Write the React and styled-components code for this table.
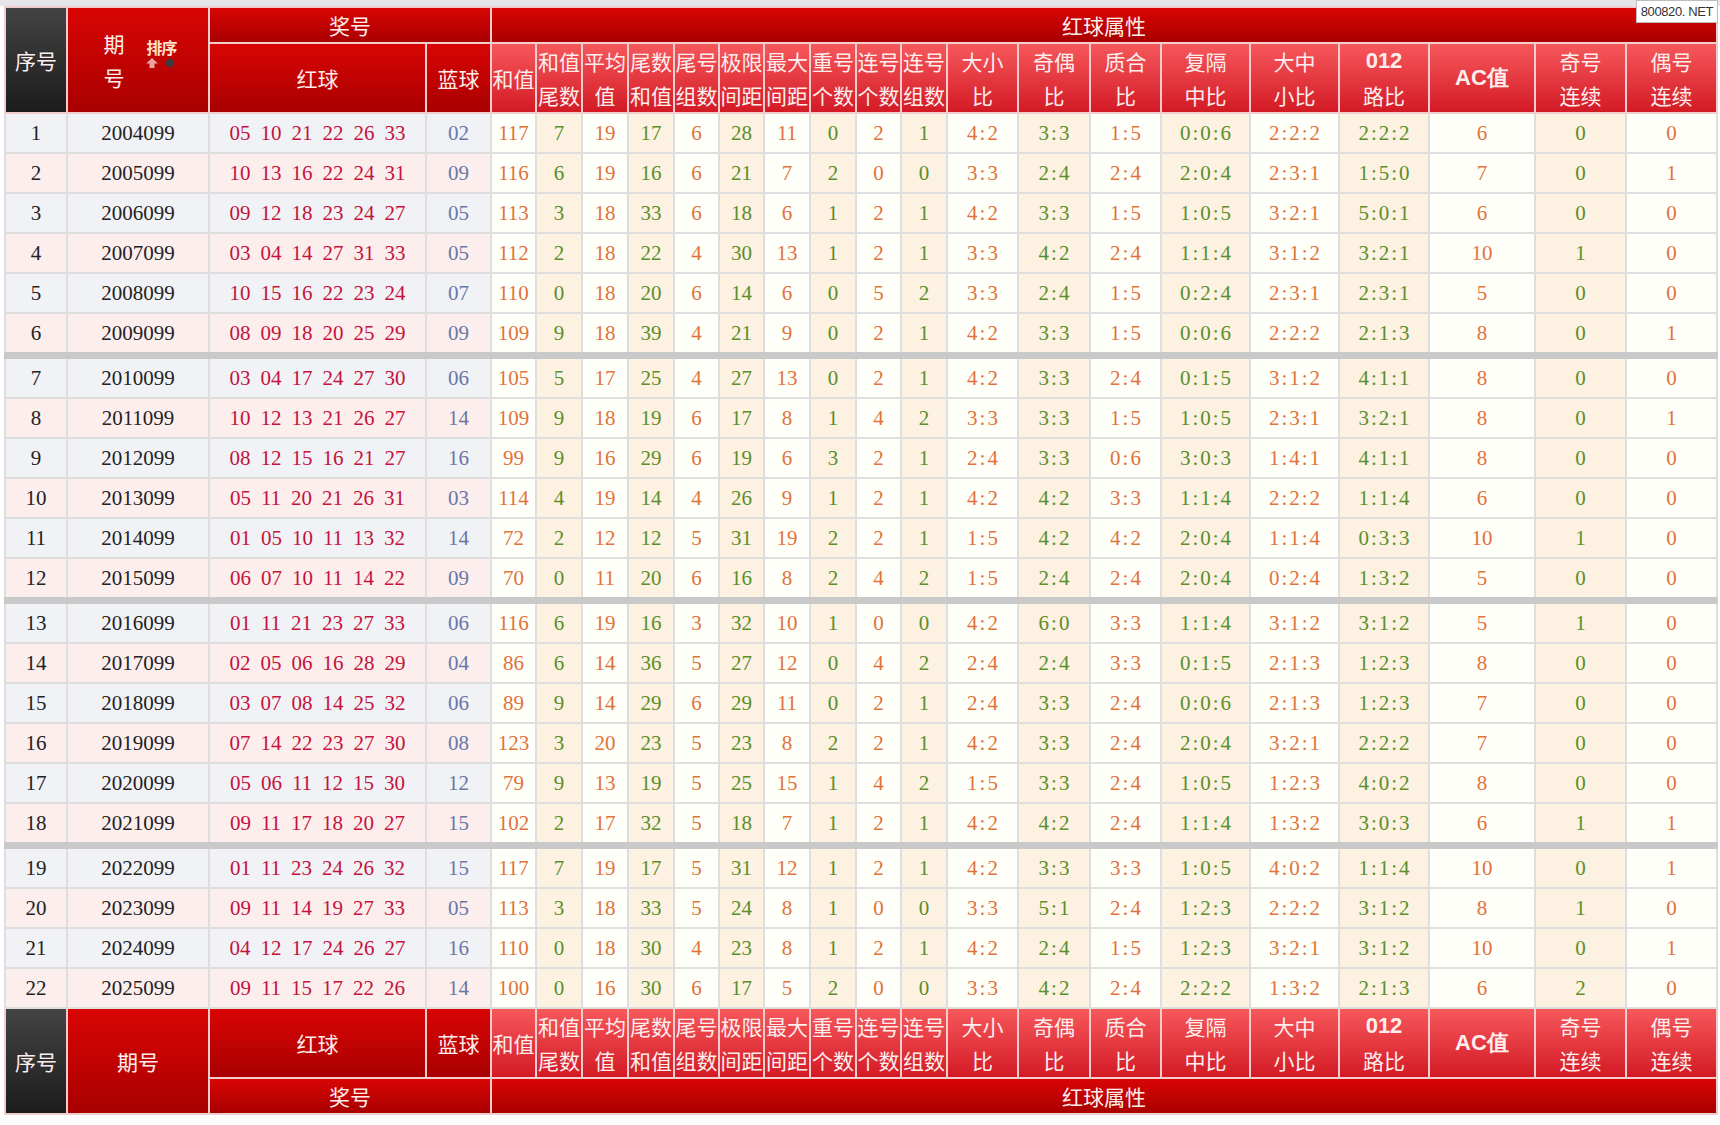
import React from 'react';
import styled, { createGlobalStyle, css } from 'styled-components';

const GlobalStyle = createGlobalStyle`
  html, body {
    margin: 0;
    padding: 0;
    background: #fff;
  }
  body {
    font-family: "Liberation Serif", "Noto Sans CJK SC", serif;
  }
`;

const Page = styled.div`
  position: relative;
  padding: 6px 4px 0 4px;
  background: linear-gradient(#e6e6ea 0, #e6e6ea 6px, #fff 6px);
  min-height: 1125px;
  box-sizing: border-box;
`;

const Watermark = styled.div`
  position: absolute;
  top: 0;
  right: 2px;
  background: #fff;
  border: 1px solid #bdbdbd;
  padding: 2px 4px 2px;
  font-family: "Liberation Sans", Arial, sans-serif;
  font-size: 13px;
  line-height: 17px;
  letter-spacing: -0.4px;
  color: #333;
`;

const Table = styled.table`
  width: 1712px;
  table-layout: fixed;
  border-collapse: collapse;
  border-bottom: 2px solid #dedede;
`;

const headTones = {
  dark: css`
    background: linear-gradient(#434343, #1c1c1c);
  `,
  deep: css`
    background: linear-gradient(#d90505, #a90000);
  `,
  light: css`
    background: linear-gradient(#f6585b, #d31a25);
  `,
};

const HeadCell = styled.th`
  ${(p) => headTones[p.$tone || 'deep']}
  border: 2px solid #f1cdcd;
  color: #fdeeee;
  font-family: "Noto Sans CJK SC", sans-serif;
  font-weight: 400;
  font-size: 21px;
  line-height: 34px;
  padding: 0;
  text-align: center;
  vertical-align: middle;
  height: ${(p) => p.$h || 'auto'};
  overflow: hidden;
`;

const Line = styled.div`
  white-space: nowrap;
  ${(p) =>
    p.$bold &&
    css`
      font-family: "Liberation Sans", Arial, sans-serif;
      font-weight: 700;
      font-size: 22px;
    `}
`;

const PeriodHead = styled.div`
  display: flex;
  align-items: center;
  justify-content: center;
  gap: 22px;
  padding-left: 4px;
`;

const StackText = styled.div`
  display: flex;
  flex-direction: column;
  line-height: 34px;
`;

const Sort = styled.div`
  display: flex;
  flex-direction: column;
  align-items: center;
  margin-top: -14px;
`;

const SortLabel = styled.span`
  font-size: 16px;
  font-weight: 700;
  line-height: 19px;
  color: #ffe2c8;
  letter-spacing: -1px;
`;

const Row = styled.tr`
  ${(p) =>
    p.$sep &&
    css`
      & > td {
        border-top: 7px solid #c9c9c9;
      }
    `}
`;

const cellTones = {
  idx: css`
    color: #222;
  `,
  red: css`
    color: #c4133c;
  `,
  blue: css`
    color: #6877a6;
  `,
};

const Cell = styled.td`
  border: 2px solid #dedede;
  padding: 0;
  height: 38px;
  text-align: center;
  vertical-align: middle;
  font-size: 21px;
  white-space: nowrap;
  overflow: hidden;
  background: ${(p) => (p.$odd ? '#f1f2f6' : '#fdeeee')};
  ${(p) => cellTones[p.$tone]}
`;

const AttrCell = styled.td`
  border: 2px solid #dedede;
  padding: 0;
  height: 38px;
  text-align: center;
  vertical-align: middle;
  font-size: 21px;
  white-space: nowrap;
  overflow: hidden;
  background: ${(p) => (p.$alt ? '#fdf1e1' : '#fffffa')};
  color: ${(p) => (p.$alt ? '#5a8f2b' : '#e0733a')};
  letter-spacing: ${(p) => (p.$ratio ? '2px' : '0')};
  text-indent: ${(p) => (p.$ratio ? '2px' : '0')};
`;

const Balls = styled.div`
  display: flex;
  justify-content: center;
  gap: 10px;
`;

const widths = [62, 142, 217, 65, 45, 46, 46, 46, 45, 45, 46, 46, 45, 46, 71, 72, 71, 89, 89, 90, 106, 91, 91];

const attrs = [
  ['和值'],
  ['和值', '尾数'],
  ['平均', '值'],
  ['尾数', '和值'],
  ['尾号', '组数'],
  ['极限', '间距'],
  ['最大', '间距'],
  ['重号', '个数'],
  ['连号', '个数'],
  ['连号', '组数'],
  ['大小', '比'],
  ['奇偶', '比'],
  ['质合', '比'],
  ['复隔', '中比'],
  ['大中', '小比'],
  ['012', '路比'],
  ['AC值'],
  ['奇号', '连续'],
  ['偶号', '连续'],
];

const rows = [
  '2004099|05 10 21 22 26 33|02|117 7 19 17 6 28 11 0 2 1 4:2 3:3 1:5 0:0:6 2:2:2 2:2:2 6 0 0',
  '2005099|10 13 16 22 24 31|09|116 6 19 16 6 21 7 2 0 0 3:3 2:4 2:4 2:0:4 2:3:1 1:5:0 7 0 1',
  '2006099|09 12 18 23 24 27|05|113 3 18 33 6 18 6 1 2 1 4:2 3:3 1:5 1:0:5 3:2:1 5:0:1 6 0 0',
  '2007099|03 04 14 27 31 33|05|112 2 18 22 4 30 13 1 2 1 3:3 4:2 2:4 1:1:4 3:1:2 3:2:1 10 1 0',
  '2008099|10 15 16 22 23 24|07|110 0 18 20 6 14 6 0 5 2 3:3 2:4 1:5 0:2:4 2:3:1 2:3:1 5 0 0',
  '2009099|08 09 18 20 25 29|09|109 9 18 39 4 21 9 0 2 1 4:2 3:3 1:5 0:0:6 2:2:2 2:1:3 8 0 1',
  '2010099|03 04 17 24 27 30|06|105 5 17 25 4 27 13 0 2 1 4:2 3:3 2:4 0:1:5 3:1:2 4:1:1 8 0 0',
  '2011099|10 12 13 21 26 27|14|109 9 18 19 6 17 8 1 4 2 3:3 3:3 1:5 1:0:5 2:3:1 3:2:1 8 0 1',
  '2012099|08 12 15 16 21 27|16|99 9 16 29 6 19 6 3 2 1 2:4 3:3 0:6 3:0:3 1:4:1 4:1:1 8 0 0',
  '2013099|05 11 20 21 26 31|03|114 4 19 14 4 26 9 1 2 1 4:2 4:2 3:3 1:1:4 2:2:2 1:1:4 6 0 0',
  '2014099|01 05 10 11 13 32|14|72 2 12 12 5 31 19 2 2 1 1:5 4:2 4:2 2:0:4 1:1:4 0:3:3 10 1 0',
  '2015099|06 07 10 11 14 22|09|70 0 11 20 6 16 8 2 4 2 1:5 2:4 2:4 2:0:4 0:2:4 1:3:2 5 0 0',
  '2016099|01 11 21 23 27 33|06|116 6 19 16 3 32 10 1 0 0 4:2 6:0 3:3 1:1:4 3:1:2 3:1:2 5 1 0',
  '2017099|02 05 06 16 28 29|04|86 6 14 36 5 27 12 0 4 2 2:4 2:4 3:3 0:1:5 2:1:3 1:2:3 8 0 0',
  '2018099|03 07 08 14 25 32|06|89 9 14 29 6 29 11 0 2 1 2:4 3:3 2:4 0:0:6 2:1:3 1:2:3 7 0 0',
  '2019099|07 14 22 23 27 30|08|123 3 20 23 5 23 8 2 2 1 4:2 3:3 2:4 2:0:4 3:2:1 2:2:2 7 0 0',
  '2020099|05 06 11 12 15 30|12|79 9 13 19 5 25 15 1 4 2 1:5 3:3 2:4 1:0:5 1:2:3 4:0:2 8 0 0',
  '2021099|09 11 17 18 20 27|15|102 2 17 32 5 18 7 1 2 1 4:2 4:2 2:4 1:1:4 1:3:2 3:0:3 6 1 1',
  '2022099|01 11 23 24 26 32|15|117 7 19 17 5 31 12 1 2 1 4:2 3:3 3:3 1:0:5 4:0:2 1:1:4 10 0 1',
  '2023099|09 11 14 19 27 33|05|113 3 18 33 5 24 8 1 0 0 3:3 5:1 2:4 1:2:3 2:2:2 3:1:2 8 1 0',
  '2024099|04 12 17 24 26 27|16|110 0 18 30 4 23 8 1 2 1 4:2 2:4 1:5 1:2:3 3:2:1 3:1:2 10 0 1',
  '2025099|09 11 15 17 22 26|14|100 0 16 30 6 17 5 2 0 0 3:3 4:2 2:4 2:2:2 1:3:2 2:1:3 6 2 0',
].map((s) => {
  const [period, reds, blue, rest] = s.split('|');
  return { period, reds: reds.split(' '), blue, values: rest.split(' ') };
});

function SortIcon() {
  return (
    <Sort>
      <SortLabel>排序</SortLabel>
      <svg width="30" height="12" viewBox="0 0 30 12">
        <path d="M6 1 L12 6.5 L8.5 6.5 L8.5 11 L3.5 11 L3.5 6.5 L0 6.5 Z" fill="#e9a3a3" />
        <circle cx="24" cy="6" r="4.2" fill="#3d3d3d" />
      </svg>
    </Sort>
  );
}

function AttrHeads() {
  return attrs.map((lines, i) => (
    <HeadCell key={i} $tone="light" $h="68px">
      {lines.map((t) => (
        <Line key={t} $bold={t === '012' || t === 'AC值'}>{t}</Line>
      ))}
    </HeadCell>
  ));
}

export default function App() {
  return (
    <>
      <GlobalStyle />
      <Page>
        <Watermark>800820. NET</Watermark>
        <Table>
          <colgroup>
            {widths.map((w, i) => (
              <col key={i} style={{ width: w }} />
            ))}
          </colgroup>
          <thead>
            <tr>
              <HeadCell rowSpan={2} $tone="dark">序号</HeadCell>
              <HeadCell rowSpan={2}>
                <PeriodHead>
                  <StackText>
                    <span>期</span>
                    <span>号</span>
                  </StackText>
                  <SortIcon />
                </PeriodHead>
              </HeadCell>
              <HeadCell colSpan={2} $h="34px">奖号</HeadCell>
              <HeadCell colSpan={19} $h="34px">红球属性</HeadCell>
            </tr>
            <tr>
              <HeadCell $h="68px">红球</HeadCell>
              <HeadCell $h="68px">蓝球</HeadCell>
              <AttrHeads />
            </tr>
          </thead>
          <tbody>
            {rows.map((r, i) => {
              const odd = i % 2 === 0;
              return (
                <Row key={r.period} $sep={i > 0 && i % 6 === 0}>
                  <Cell $odd={odd} $tone="idx">{i + 1}</Cell>
                  <Cell $odd={odd} $tone="idx">{r.period}</Cell>
                  <Cell $odd={odd} $tone="red">
                    <Balls>
                      {r.reds.map((n, j) => (
                        <span key={j}>{n}</span>
                      ))}
                    </Balls>
                  </Cell>
                  <Cell $odd={odd} $tone="blue">{r.blue}</Cell>
                  {r.values.map((v, j) => (
                    <AttrCell key={j} $alt={j % 2 === 1} $ratio={v.includes(':')}>
                      {v}
                    </AttrCell>
                  ))}
                </Row>
              );
            })}
          </tbody>
          <tfoot>
            <tr>
              <HeadCell rowSpan={2} $tone="dark">序号</HeadCell>
              <HeadCell rowSpan={2}>期号</HeadCell>
              <HeadCell $h="68px">红球</HeadCell>
              <HeadCell $h="68px">蓝球</HeadCell>
              <AttrHeads />
            </tr>
            <tr>
              <HeadCell colSpan={2} $h="34px">奖号</HeadCell>
              <HeadCell colSpan={19} $h="34px">红球属性</HeadCell>
            </tr>
          </tfoot>
        </Table>
      </Page>
    </>
  );
}
